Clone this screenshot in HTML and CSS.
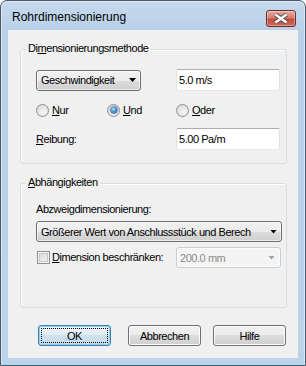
FILE: index.html
```html
<!DOCTYPE html>
<html>
<head>
<meta charset="utf-8">
<link rel="stylesheet" href="styles.css">
</head>
<body>
<div class="window">
  <div class="titlebar">
    <span class="title">Rohrdimensionierung</span>
    <div class="close">
      <svg width="28" height="15" viewBox="0 0 28 15">
        <path d="M8.5 3.5 L19.5 11.5 M19.5 3.5 L8.5 11.5" stroke="#4d4d4d" stroke-width="4.6" fill="none"/>
        <path d="M8.5 3.5 L19.5 11.5 M19.5 3.5 L8.5 11.5" stroke="#ffffff" stroke-width="2.6" fill="none"/>
      </svg>
    </div>
  </div>
  <div class="client">
    <div class="group g1">
      <div class="legend">Di<u>m</u>ensionierungsmethode</div>
      <div class="row r1">
        <div class="col-left">
          <div class="combo c-method"><span>Geschwindigkeit</span><i class="arrow"></i></div>
        </div>
        <div class="textbox">5.0 m/s</div>
      </div>
      <div class="row radios">
        <label class="radio w-nur"><span class="rb"></span><span><u>N</u>ur</span></label>
        <label class="radio w-und"><span class="rb checked"></span><span><u>U</u>nd</span></label>
        <label class="radio"><span class="rb"></span><span><u>O</u>der</span></label>
      </div>
      <div class="row r3">
        <div class="col-left"><u>R</u>eibung:</div>
        <div class="textbox">5.00 Pa/m</div>
      </div>
    </div>
    <div class="group g2">
      <div class="legend"><u>A</u>bhängigkeiten</div>
      <div class="label">Abzweigdimensionierung:</div>
      <div class="combo wide"><span>Größerer Wert von Anschlussstück und Berech</span><i class="arrow"></i></div>
      <div class="row check">
        <label class="col-left checkbox"><span class="cb"></span><span><u>D</u>imension beschränken:</span></label>
        <div class="combo disabled"><span>200.0 mm</span><i class="arrow"></i></div>
      </div>
    </div>
    <div class="buttons">
      <div class="btn default"><span>OK</span></div>
      <div class="btn">Abbrechen</div>
      <div class="btn">Hilfe</div>
    </div>
  </div>
</div>
</body>
</html>
```
FILE: styles.css
```css
html, body {
  margin: 0;
  padding: 0;
  background: #ffffff;
}

.window {
  width: 306px;
  height: 366px;
  box-sizing: border-box;
  border: 1px solid #4a5a6c;
  border-radius: 7px 7px 0 0;
  background: linear-gradient(#c6d9ed, #b9d0e8 30px, #bcd3ea);
  box-shadow: inset 0 0 0 1px rgba(255, 255, 255, 0.45), inset 0 -1px 0 #4cc3e6;
  padding: 0 7px 7px;
  display: flex;
  flex-direction: column;
  font-family: "Liberation Sans", Arial, sans-serif;
  font-size: 11px;
  letter-spacing: -0.45px;
  color: #000;
}

.titlebar {
  height: 29px;
  flex: none;
  display: flex;
  align-items: flex-start;
  justify-content: space-between;
}

.title {
  font-size: 12px;
  letter-spacing: 0;
  line-height: 15px;
  margin: 9px 0 0 4px;
  color: #000;
}

.close {
  width: 30px;
  height: 17px;
  box-sizing: border-box;
  margin: 9px 2px 0 0;
  border: 1px solid #6d2b24;
  border-radius: 3px;
  background: linear-gradient(#e6aca3, #d27d72 45%, #c24b3d 55%, #d06a5b);
  box-shadow: inset 0 0 0 1px rgba(255, 255, 255, 0.35);
  display: flex;
  align-items: center;
  justify-content: center;
}

.close svg {
  display: block;
}

.client {
  flex: 1;
  background: #f0f0f0;
  padding-top: 19px;
  display: flex;
  flex-direction: column;
}

.group {
  margin-left: 12px;
  width: 267px;
  box-sizing: border-box;
  border: 1px solid #d5dfe5;
  border-radius: 3px;
  box-shadow: inset 1px 1px 0 #ffffff;
  padding: 0 0 13px 15px;
}

.g2 {
  margin-top: 19px;
  padding-bottom: 39px;
}

.legend {
  width: fit-content;
  margin: -8px 0 0 -10px;
  padding: 0 2px;
  background: #f0f0f0;
  line-height: 13px;
  height: 13px;
}

.row {
  display: flex;
  align-items: center;
}

.col-left {
  width: 140px;
  flex: none;
  display: flex;
  align-items: center;
}

.r1 {
  margin-top: 14px;
  height: 22px;
}

.radios {
  margin-top: 12px;
  height: 14px;
}

.r3 {
  margin-top: 11px;
  height: 22px;
}

.radio, .checkbox {
  display: flex;
  align-items: center;
  line-height: 13px;
}

.w-nur { width: 71px; }
.w-und { width: 69px; }

.rb {
  width: 13px;
  height: 13px;
  box-sizing: border-box;
  border-radius: 50%;
  border: 1px solid #8e8f8f;
  background: radial-gradient(circle at 60% 65%, #f6f6f6 0, #e4e4e4 55%, #cfcfcf 100%);
  margin-right: 3px;
  flex: none;
  display: flex;
  align-items: center;
  justify-content: center;
}

.rb.checked::after {
  content: "";
  width: 6px;
  height: 6px;
  border-radius: 50%;
  background: radial-gradient(circle at 40% 35%, #b4e4fb 0, #3b86c8 55%, #1c4f8e 100%);
  box-shadow: 0 0 0 0.5px #1d4d7e, 0 0 1.5px 1px rgba(80, 160, 220, 0.45);
}

.cb {
  width: 13px;
  height: 13px;
  box-sizing: border-box;
  border: 1px solid #8e8f8f;
  background: linear-gradient(135deg, #d6d6d6, #f7f7f7);
  box-shadow: inset 0 0 0 1px #f4f4f4, inset 0 0 0 2px #c8c8c8;
  margin: 0 2px 0 1px;
  flex: none;
}

.combo {
  box-sizing: border-box;
  height: 21px;
  display: flex;
  align-items: center;
  justify-content: space-between;
  padding: 0 4px 0 4px;
  border: 1px solid #707070;
  border-radius: 3px;
  background: linear-gradient(#f2f2f2 0%, #ebebeb 50%, #dddddd 50%, #cfcfcf 100%);
  box-shadow: inset 0 0 0 1px rgba(255, 255, 255, 0.6);
  white-space: nowrap;
  overflow: hidden;
}

.c-method {
  width: 105px;
}

.wide {
  width: 246px;
  margin-top: 5px;
}

.arrow {
  display: block;
  width: 7px;
  height: 4px;
  background: #000;
  clip-path: polygon(0 0, 100% 0, 50% 100%);
  flex: none;
}

.disabled {
  width: 105px;
  background: #f4f4f4;
  border-color: #c9cdd0;
  box-shadow: inset 0 0 0 1px #fbfbfb;
  color: #8b8b8b;
  padding: 0 5px 0 3px;
}

.disabled .arrow {
  background: #a3a3a3;
}

.textbox {
  box-sizing: border-box;
  width: 104px;
  height: 22px;
  border: 1px solid;
  border-color: #abadb3 #dbdfe6 #e3e9ef #e2e3ea;
  border-radius: 2px;
  background: #ffffff;
  padding-left: 2px;
  display: flex;
  align-items: center;
}

.label {
  margin-top: 14px;
  line-height: 13px;
}

.check {
  margin-top: 5px;
  height: 21px;
}

.buttons {
  margin-top: 17px;
  padding-left: 30px;
  display: flex;
}

.btn {
  width: 73px;
  height: 21px;
  box-sizing: border-box;
  border: 1px solid #707070;
  border-radius: 3px;
  background: linear-gradient(#f2f2f2 0%, #ebebeb 50%, #dddddd 50%, #cfcfcf 100%);
  box-shadow: inset 0 0 0 1px #fcfcfc;
  display: flex;
  align-items: center;
  justify-content: center;
  margin-left: 17px;
}

.btn:first-child {
  margin-left: 0;
}

.btn:last-child {
  margin-left: 12px;
}

.btn.default {
  border-color: #3c7fb1;
  background: linear-gradient(#eef5fa 0%, #e0ecf4 50%, #cfe2ee 50%, #c4dbea 100%);
  box-shadow: inset 0 0 0 1px #8ed0f0;
  outline: 1px dotted #000;
  outline-offset: -4px;
}

u {
  text-decoration: underline;
  text-underline-offset: 1px;
}
```
